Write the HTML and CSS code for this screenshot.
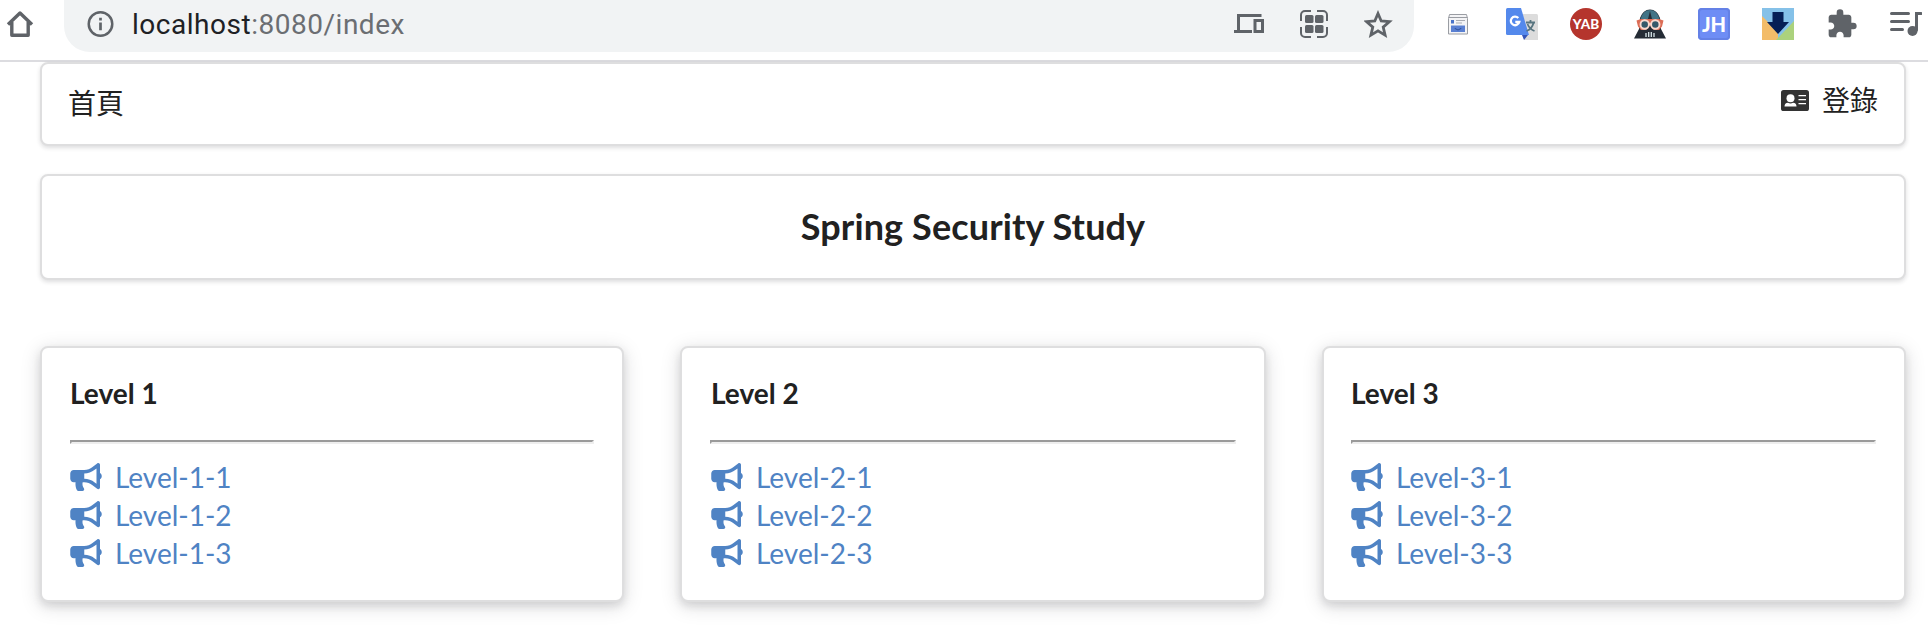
FILE: index.html
```html
<!DOCTYPE html>
<html lang="zh-Hant">
<head>
<meta charset="utf-8">
<title>Spring Security Study</title>
<link rel="stylesheet" href="styles.css">
</head>
<body>
<svg class="defs" width="0" height="0" aria-hidden="true">
  <symbol id="horn" viewBox="0 0 576 512"><path fill="currentColor" d="M576 240c0-23.63-12.95-44.04-32-55.12V32.010C544 23.260 537.020 0 512 0c-7.120 0-14.190 2.380-19.980 7.020l-85.030 68.030C364.280 109.190 310.660 128 256 128H64c-35.350 0-64 28.650-64 64v96c0 35.350 28.650 64 64 64h33.700c-1.390 10.480-2.180 21.140-2.180 32 0 39.770 9.260 77.350 25.560 110.940 5.190 10.690 16.520 17.060 28.400 17.060h74.280c26.050 0 41.690-29.840 25.900-50.560-16.400-21.520-26.150-48.360-26.150-77.440 0-11.110 1.620-21.790 4.410-32H256c54.660 0 108.280 18.810 150.980 52.950l85.030 68.030a32.023 32.023 0 0 0 19.980 7.020c24.920 0 32-22.780 32-32V295.130C563.050 284.040 576 263.630 576 240zm-96 141.420l-33.050-26.440C392.950 311.780 325.120 288 256 288v-96c69.120 0 136.950-23.780 190.950-66.980L480 98.580v282.840z"/></symbol>
</svg>
<header class="toolbar">
  <svg class="home" viewBox="0 0 28 28" fill="none" stroke="#5f6368" stroke-width="3.4" stroke-linejoin="round"><path d="M2 14.500 14 3l12 11.500M5.800 12v13.300h16.400V12"/></svg>
  <div class="omnibox">
    <svg class="info" viewBox="0 0 28 28"><circle cx="14" cy="14" r="12.200" fill="none" stroke="#5f6368" stroke-width="2.600"/><path fill="#5f6368" d="M12.600 7.500h2.800v2.800h-2.800zM12.600 12.500h2.800v8h-2.800z"/></svg>
    <div class="url">localhost<span class="path">:8080/index</span></div>
    <div class="page-actions">
      <svg width="30" height="22" viewBox="0 0 30 22" fill="none" stroke="#5f6368" stroke-width="3"><path d="M27.500 2.500H4.500V18M0 18.500h18" /><path d="M21 7.500h7.500v11H21z"/></svg>
      <svg width="28" height="28" viewBox="0 0 28 28"><path d="M1 11V5a4 4 0 0 1 4-4h6M17 1h6a4 4 0 0 1 4 4v6M27 17v6a4 4 0 0 1-4 4h-6M11 27H5a4 4 0 0 1-4-4v-6" fill="none" stroke="#5f6368" stroke-width="2"/><g fill="#5f6368"><rect x="5" y="5" width="8.500" height="8" rx="1.500"/><rect x="15" y="5" width="8.500" height="8" rx="1.500"/><rect x="5" y="15" width="8.500" height="8" rx="1.500"/><rect x="15" y="15" width="8.500" height="8" rx="1.500"/></g></svg>
      <svg width="30" height="28" viewBox="0 0 30 28"><path fill="none" stroke="#5f6368" stroke-width="2.800" d="m14 3.500 3.200 7.500 8.200.7-6.200 5.400 1.900 8-7.100-4.300-7.100 4.300 1.900-8-6.200-5.400 8.200-.7z"/></svg>
    </div>
  </div>
  <div class="extensions">
    <svg width="32" height="32" viewBox="0 0 32 32"><path d="M7.500 6.500h17l1 4v15.500h-19V10.500z" fill="#f4f4f6" stroke="#9a9da3"/><path d="M6.500 9.500h19" stroke="#9a9da3"/><rect x="9" y="12" width="3" height="3.500" fill="#4a74c9"/><path d="M14 12.500h9M14 15h6" stroke="#a8abb2"/><rect x="9" y="17.500" width="14" height="6.500" fill="#5a80d2"/><path d="M13 20v.5q3 3 6 0V20" fill="none" stroke="#2c4f9b"/></svg>
    <svg width="32" height="32" viewBox="0 0 32 32"><path d="M14 6h16.500q1.500 0 1.500 1.500V32H18z" fill="#dcdcdc"/><path d="M16 27h6l-4 5z" fill="#3556b8"/><path d="M1.500 0H15l8 27H1.500Q0 27 0 25.500v-24Q0 0 1.500 0z" fill="#5489ec"/><path d="M12.300 10A4.300 4.300 0 1 0 13.300 14H9.300" fill="none" stroke="#fff" stroke-width="2.300"/><path d="M20 14.500h9M24.500 12v2.500M27.500 15q-1.500 6-7 8M21.500 16q2 5 7 7" fill="none" stroke="#587580" stroke-width="1.800"/></svg>
    <div class="yab">YAB</div>
    <svg width="32" height="32" viewBox="0 0 32 32"><path d="M0 30.500 5 21 6 10Q9 1.500 16 1.500T26 10l1 11 5 9.500z" fill="#252c35"/><path d="M6.500 11Q9 2 16 2t9.500 9L23 14 18 11 16 3l-2 8-5 3z" fill="#427486"/><path d="M2.500 12.500 7 11h18l4.500 1.500-1.500 6-3 3.500h-5l-3-4h-2l-3 4H7l-3-3.500z" fill="#dc6d56"/><g fill="#35596a" stroke="#f9d9cf" stroke-width="1.900"><circle cx="10.700" cy="16.500" r="4.200"/><circle cx="21.300" cy="16.500" r="4.200"/></g><path d="M15 16h2" stroke="#f9d9cf" stroke-width="1.600"/><path d="M12 25v4M14.700 24v5M17.300 24v5M20 25v4" stroke="#d7e5e9" stroke-width="1.300"/></svg>
    <div class="jh">JH</div>
    <svg width="32" height="32" viewBox="0 0 32 32"><path fill="#85c1e8" d="M0 0h32v32H0z"/><path fill="#f3bc69" d="M0 8v24h16V24z"/><path fill="#abd27d" d="M32 13v19H14z"/><path fill="#061f55" d="M10.500 4h11v10H27L16 26 5 14h5.500z"/></svg>
    <svg width="32" height="32" viewBox="0 0 24 24"><path fill="#5f6368" d="M20.500 11H19V7c0-1.100-.9-2-2-2h-4V3.500a2.500 2.500 0 0 0-5 0V5H4c-1.100 0-2 .9-2 2v3.800h1.500c1.500 0 2.700 1.200 2.700 2.700S5 16.200 3.500 16.200H2V20c0 1.100.9 2 2 2h3.800v-1.500c0-1.500 1.200-2.700 2.700-2.700s2.700 1.200 2.700 2.700V22H17c1.100 0 2-.9 2-2v-4h1.500a2.500 2.500 0 0 0 0-5z"/></svg>
    <svg width="32" height="32" viewBox="0 0 32 32"><g fill="none" stroke="#5f6368" stroke-width="3" stroke-linecap="round"><path d="M1.500 5.500h17M1.500 13.500h17M1.500 21.500h11"/><path d="M31 5.500h-4.500V22"/></g><circle cx="22.500" cy="23" r="5" fill="#5f6368"/></svg>
  </div>
</header>
<main class="container">
  <nav class="segment navbar">
    <a class="nav-home">首頁</a>
    <a class="login"><svg class="card-icon" viewBox="0 0 28 21"><rect width="28" height="21" rx="2.600" fill="#333"/><g fill="#fff"><circle cx="9.500" cy="8.300" r="4"/><path d="M3.500 16.500q0-3.500 3.500-3.800 2.500 1.500 5 0 3.500.3 3.500 3.800z"/><path d="M17.500 5H25v1.300h-7.500zM17.500 9H25v1.300h-7.500zM17.500 13H25v1.300h-7.500z"/></g></svg>登錄</a>
  </nav>
  <section class="segment banner"><h3>Spring Security Study</h3></section>
  <div class="levels">
    <section class="segment level"><h5>Level 1</h5><hr>
      <a><svg class="horn"><use href="#horn"/></svg>Level-1-1</a><a><svg class="horn"><use href="#horn"/></svg>Level-1-2</a><a><svg class="horn"><use href="#horn"/></svg>Level-1-3</a></section>
    <section class="segment level level-mid"><h5>Level 2</h5><hr>
      <a><svg class="horn"><use href="#horn"/></svg>Level-2-1</a><a><svg class="horn"><use href="#horn"/></svg>Level-2-2</a><a><svg class="horn"><use href="#horn"/></svg>Level-2-3</a></section>
    <section class="segment level level-last"><h5>Level 3</h5><hr>
      <a><svg class="horn"><use href="#horn"/></svg>Level-3-1</a><a><svg class="horn"><use href="#horn"/></svg>Level-3-2</a><a><svg class="horn"><use href="#horn"/></svg>Level-3-3</a></section>
  </div>
</main>
</body>
</html>
```
FILE: styles.css
```css
* { box-sizing: border-box; }
body {
  margin: 0;
  height: 638px;
  overflow: hidden;
  background: #fff;
  color: #212121;
  font: 28px/40px Lato, "Noto Sans CJK TC", sans-serif;
}
svg { display: block; flex: none; }
.defs { position: absolute; }
.toolbar {
  display: flex;
  height: 62px;
  padding-left: 6px;
  border-bottom: 2px solid #dcdce0;
}
.home { width: 28px; height: 28px; margin-top: 10px; }
.omnibox {
  display: flex;
  align-items: center;
  width: 1350px;
  height: 52px;
  margin-left: 30px;
  padding: 0 20px 4px 23px;
  border-radius: 0 0 26px 26px;
  background: #f1f3f4;
}
.info { width: 27px; height: 28px; }
.url {
  margin-left: 18px;
  padding-top: 2px;
  font-family: Roboto, sans-serif;
  letter-spacing: .52px;
  color: #202124;
}
.path { color: #6b6e72; }
.page-actions { display: flex; align-items: center; gap: 36px; margin-left: auto; }
.extensions { display: flex; gap: 32px; margin: 8px 0 0 28px; }
.yab, .jh {
  flex: none;
  width: 32px;
  height: 32px;
  color: #fff;
  text-align: center;
}
.yab { border-radius: 50%; background: #b5352d; font: 900 13.5px/32px Lato, sans-serif; }
.jh { border-radius: 4px; background: #6e8df5; font: 900 20px/32px Lato, sans-serif; box-shadow: inset 0 0 0 2px #6481e6; }
.container { padding: 0 22px 0 40px; }
.segment {
  border: 2px solid #dededf;
  border-radius: 8px;
  background: #fff;
  box-shadow: 0 2px 4px rgba(34, 36, 38, .15);
}
.navbar {
  display: flex;
  justify-content: space-between;
  height: 84px;
  padding: 19px 26px 0;
}
.login { display: flex; align-items: center; height: 34px; }
.card-icon { width: 28px; height: 21px; margin-right: 13px; }
.banner { height: 106px; margin-top: 28px; text-align: center; }
h3 { margin: 0; font-size: 36px; line-height: 100px; font-weight: 700; letter-spacing: .12px; }
.levels { display: grid; grid-template-columns: 584px 586px 584px; gap: 56px; margin-top: 66px; }
.level {
  height: 256px;
  padding: 25px 28px;
  box-shadow: 0 4px 8px rgba(34, 36, 38, .12), 0 4px 20px rgba(34, 36, 38, .15);
}
.level-last { padding-left: 27px; }
h5 { margin: 0; font-size: 28px; line-height: 40px; font-weight: 700; }
hr {
  height: 4px;
  margin: 27px 0 14px;
  border: 2px solid;
  border-color: #9a9a9a #eee #eee #9a9a9a;
}
.level a { display: flex; align-items: center; height: 38px; color: #4f83c4; }
.level-mid h5, .level-mid a { margin-left: 1px; }
.horn { width: 32px; height: 28px; margin-right: 13px; }
```
